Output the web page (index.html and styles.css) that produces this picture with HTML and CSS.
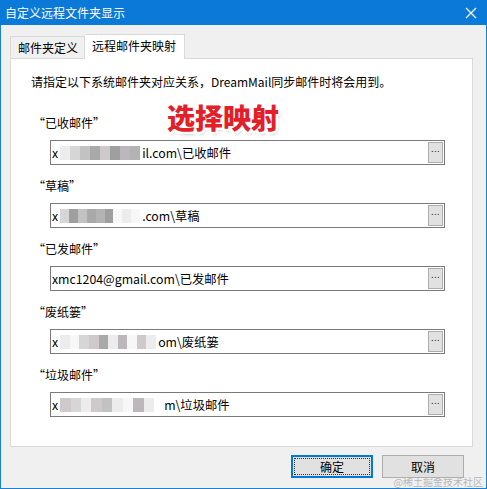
FILE: index.html
```html
<!DOCTYPE html>
<html lang="zh">
<head>
<meta charset="utf-8">
<title>自定义远程文件夹显示</title>
<link rel="stylesheet" href="styles.css">
</head>
<body>
<div class="window">
  <div class="titlebar">
    <span class="title">自定义远程文件夹显示</span>
    <svg class="close" width="12" height="12" viewBox="0 0 12 12"><path d="M1 1 L11 11 M11 1 L1 11" stroke="#fff" stroke-width="1.2" fill="none"/></svg>
  </div>
  <div class="content">
    <div class="tabs">
      <div class="tab">邮件夹定义</div>
      <div class="tab active">远程邮件夹映射</div>
    </div>
    <div class="panel">
      <p class="desc">请指定以下系统邮件夹对应关系，DreamMail同步邮件时将会用到。</p>
      <div class="row">
        <div class="label">“已收邮件”</div>
        <div class="field">
          <span class="val">x<span class="blur"><i class="b1"></i><i class="b2"></i><i class="b3"></i><i class="b4"></i><i class="b5"></i><i class="b6"></i><i class="b7"></i><i class="b8"></i></span>il.com\已收邮件</span>
          <span class="dots">...</span>
        </div>
      </div>
      <div class="row">
        <div class="label">“草稿”</div>
        <div class="field">
          <span class="val">x<span class="blur"><i class="b2"></i><i class="b6"></i><i class="b3"></i><i class="b4"></i><i class="b8"></i><i class="b6"></i><i class="b9"></i><i class="b1"></i><i class="b9"></i></span>.com\草稿</span>
          <span class="dots">...</span>
        </div>
      </div>
      <div class="row">
        <div class="label">“已发邮件”</div>
        <div class="field">
          <span class="val">xmc1204@gmail.com\已发邮件</span>
          <span class="dots">...</span>
        </div>
      </div>
      <div class="row">
        <div class="label">“废纸篓”</div>
        <div class="field">
          <span class="val">x<span class="blur wide"><i class="b1"></i><i class="b9"></i><i class="b2"></i><i class="b5"></i><i class="b4"></i><i class="b1"></i><i class="b7"></i><i class="b9"></i><i class="b5"></i><i class="b1"></i></span>om\废纸篓</span>
          <span class="dots">...</span>
        </div>
      </div>
      <div class="row">
        <div class="label">“垃圾邮件”</div>
        <div class="field">
          <span class="val">x<span class="blur wide2"><i class="b5"></i><i class="b2"></i><i class="b1"></i><i class="b5"></i><i class="b3"></i><i class="b1"></i><i class="b9"></i><i class="b7"></i><i class="b1"></i></span>m\垃圾邮件</span>
          <span class="dots">...</span>
        </div>
      </div>
      <div class="stamp">选择映射</div>
    </div>
    <div class="footer">
      <button class="btn primary"><span class="focus">确定</span></button>
      <button class="btn">取消</button>
    </div>
  </div>
  <div class="watermark">@稀土掘金技术社区</div>
</div>
</body>
</html>
```
FILE: styles.css
```css
html, body {
  margin: 0;
  padding: 0;
  background: #f0f0f0;
}
body {
  font-family: "Noto Sans CJK SC", "Noto Sans", "DejaVu Sans", sans-serif;
  font-size: 12px;
  color: #000;
}
.window {
  position: relative;
  width: 487px;
  height: 489px;
  box-sizing: border-box;
  border: 1px solid #1a7fd6;
  border-top: none;
  background: #f0f0f0;
  display: flex;
  flex-direction: column;
}
.titlebar {
  height: 25px;
  margin: 0 -1px;
  background: #0a79d8;
  color: #fff;
  display: flex;
  align-items: center;
  justify-content: space-between;
  padding: 0 10px 0 5px;
  font-size: 12px;
}
.title { line-height: 16px; }
.close { display: block; }
.content {
  flex: 1;
  padding: 9px 13px 0 9px;
  display: flex;
  flex-direction: column;
}
.tabs {
  display: flex;
  align-items: flex-end;
  height: 24px;
  position: relative;
  z-index: 1;
}
.tab {
  height: 22px;
  box-sizing: border-box;
  border: 1px solid #d9d9d9;
  border-bottom: none;
  background: #f0f0f0;
  padding: 0 6px 0 7px;
  line-height: 22px;
  color: #000;
}
.tab.active {
  height: 25px;
  background: #fff;
  padding: 0 8px 0 7px;
  line-height: 22px;
  margin-bottom: -1px;
  border-left: none;
}
.panel {
  position: relative;
  height: 389px;
  box-sizing: border-box;
  background: #fff;
  border: 1px solid #d9d9d9;
}
.desc {
  margin: 15px 0 0 20px;
  line-height: 16px;
}
.row {
  margin-top: 25px;
}
.row + .row {
  margin-top: 13px;
}
.label {
  margin-left: 22px;
  line-height: 16px;
  font-size: 12px;
}
.field {
  margin: 9px 0 0 39px;
  width: 395px;
  height: 25px;
  box-sizing: border-box;
  border: 1px solid #7a7a7a;
  display: flex;
  align-items: center;
  justify-content: space-between;
  padding: 0 1px 0 1px;
}
.val {
  font-size: 12.3px;
  line-height: 18px;
  display: flex;
  align-items: center;
  white-space: pre;
}
.blur {
  display: inline-flex;
  height: 14px;
  margin: 0 2px 0 2px;
  width: 80px;
}
.blur.wide { width: 96px; }
.blur.wide2 { width: 94px; margin-right: 10px; }
.blur i {
  flex: 1;
  height: 100%;
}
.b1 { background: #ececec; }
.b2 { background: #d6d6d6; }
.b3 { background: #c2c2c2; }
.b4 { background: #a9a9a9; }
.b5 { background: #cfc9cc; }
.b6 { background: #9f9f9f; }
.b7 { background: #bdb7bb; }
.b8 { background: #b3b3b3; }
.b9 { background: #f7f7f7; }
.dots {
  width: 15px;
  height: 21px;
  box-sizing: border-box;
  background: #e1e1e1;
  border: 1px solid #adadad;
  font-family: "DejaVu Sans", sans-serif;
  font-size: 8px;
  display: flex;
  align-items: center;
  justify-content: center;
  padding-bottom: 6px;
  letter-spacing: 0.5px;
  line-height: 10px;
}
.stamp {
  position: absolute;
  left: 156px;
  top: 41px;
  font-size: 28px;
  font-weight: 900;
  line-height: 34px;
  color: #e3202a;
  text-shadow:
    2px 0 0 #fff, -2px 0 0 #fff, 0 2px 0 #fff, 0 -2px 0 #fff,
    2px 2px 0 #fff, -2px -2px 0 #fff, 2px -2px 0 #fff, -2px 2px 0 #fff,
    2px 3px 3px rgba(0,0,0,0.2);
}
.footer {
  display: flex;
  justify-content: flex-end;
  gap: 9px;
  margin-top: 8px;
  padding-right: 9px;
}
.btn {
  width: 82px;
  height: 23px;
  box-sizing: border-box;
  background: #e1e1e1;
  border: 1px solid #adadad;
  font-family: inherit;
  font-size: 12px;
  color: #000;
  padding: 0;
  display: flex;
  align-items: center;
  justify-content: center;
}
.btn.primary {
  border: 2px solid #0078d7;
  padding: 1px;
}
.focus {
  flex: 1;
  align-self: stretch;
  display: flex;
  align-items: center;
  justify-content: center;
  border: 1px dotted #333;
}
.watermark {
  position: absolute;
  right: 3px;
  bottom: 0;
  font-size: 10px;
  line-height: 12px;
  color: #b8b8b8;
  font-family: "Noto Sans CJK SC", serif;
}
```
